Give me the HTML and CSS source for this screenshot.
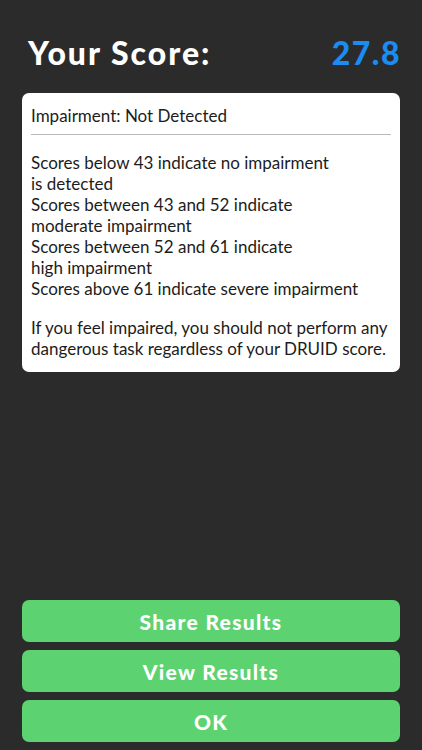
FILE: index.html
```html
<!DOCTYPE html>
<html>
<head>
<meta charset="utf-8">
<link rel="stylesheet" href="styles.css">
</head>
<body>
<div class="screen">
  <header class="header">
    <h1 class="title">Your Score:</h1>
    <div class="score">27.8</div>
  </header>
  <section class="card">
    <div class="status">Impairment: Not Detected</div>
    <div class="divider"></div>
    <p class="ranges">Scores below 43 indicate no impairment<br>is detected<br>Scores between 43 and 52 indicate<br>moderate impairment<br>Scores between 52 and 61 indicate<br>high impairment<br>Scores above 61 indicate severe impairment</p>
    <p class="warning">If you feel impaired, you should not perform any<br>dangerous task regardless of your DRUID score.</p>
  </section>
  <div class="spacer"></div>
  <nav class="actions">
    <button class="btn">Share Results</button>
    <button class="btn">View Results</button>
    <button class="btn">OK</button>
  </nav>
</div>
</body>
</html>
```
FILE: styles.css
```css
* { box-sizing: border-box; }
html, body { margin: 0; padding: 0; }
body {
  background: #2b2b2b;
  font-family: "Lato", "Liberation Sans", sans-serif;
  width: 422px;
  height: 750px;
  overflow: hidden;
}
.screen {
  display: flex;
  flex-direction: column;
  height: 750px;
  padding: 0 22px 8px 22px;
}
.header {
  display: flex;
  justify-content: space-between;
  align-items: center;
  height: 93px;
  padding: 12px 0 0 6px;
}
.title {
  margin: 0;
  color: #ffffff;
  font-size: 32px;
  font-weight: 900;
  letter-spacing: 2px;
}
.score {
  color: #1a8cf2;
  font-size: 32px;
  font-weight: 900;
  letter-spacing: 1.5px;
  margin-right: -1px;
}
.card {
  background: #ffffff;
  border-radius: 7px;
  padding: 12px 9px 13px 9px;
  color: #1c1c1c;
  font-size: 17px;
  line-height: 21px;
}
.status {
  height: 22px;
}
.divider {
  height: 1px;
  background: #b9b9b9;
  margin: 7px 0 17px 0;
}
.ranges {
  margin: 0;
}
.warning {
  margin: 18px 0 0 0;
  white-space: nowrap;
}
.spacer { flex: 1; }
.actions {
  display: flex;
  flex-direction: column;
  gap: 8px;
}
.btn {
  height: 42px;
  border: none;
  border-radius: 7px;
  background: #5dd270;
  color: #ffffff;
  font-family: "Lato", "Liberation Sans", sans-serif;
  font-size: 21px;
  font-weight: 900;
  letter-spacing: 1.3px;
  padding: 0;
}
```
